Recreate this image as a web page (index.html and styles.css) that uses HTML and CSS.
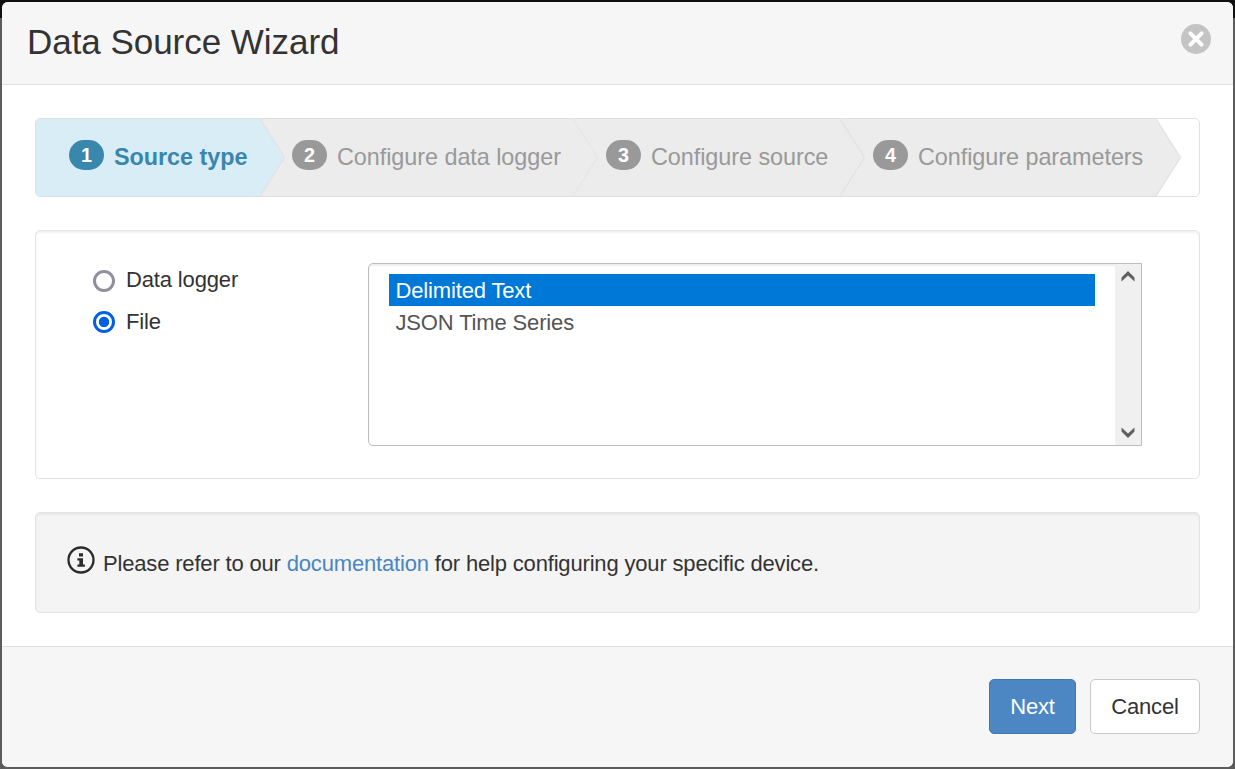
FILE: index.html
```html
<!DOCTYPE html>
<html lang="en">
<head>
<meta charset="utf-8">
<title>Data Source Wizard</title>
<link rel="stylesheet" href="styles.css">
</head>
<body>
<div class="modal">
  <header class="modal-header">
    <h1 class="title">Data Source Wizard</h1>
    <svg class="close" viewBox="0 0 30 30"><circle cx="15" cy="15" r="15" fill="#c4c4c4"/><path d="M9.4 9.4l11.2 11.2M20.6 9.4L9.4 20.6" stroke="#fff" stroke-width="4" stroke-linecap="round"/></svg>
  </header>
  <main class="modal-body">
    <ol class="steps">
      <li class="step step-1 active"><span class="badge">1</span><span class="label">Source type</span><svg class="arrow" viewBox="0 0 26 77"><path d="M0 0L24 38.5L0 77Z"/><path class="edge" d="M0 0L24.5 38.5L0 77"/></svg></li>
      <li class="step step-2"><span class="badge">2</span><span class="label">Configure data logger</span><svg class="arrow" viewBox="0 0 26 77"><path d="M0 0L24 38.5L0 77Z"/><path class="edge" d="M0 0L24.5 38.5L0 77"/></svg></li>
      <li class="step step-3"><span class="badge">3</span><span class="label">Configure source</span><svg class="arrow" viewBox="0 0 26 77"><path d="M0 0L24 38.5L0 77Z"/><path class="edge" d="M0 0L24.5 38.5L0 77"/></svg></li>
      <li class="step step-4"><span class="badge">4</span><span class="label">Configure parameters</span><svg class="arrow" viewBox="0 0 26 77"><path d="M0 0L24 38.5L0 77Z"/><path class="edge" d="M0 0L24.5 38.5L0 77"/></svg></li>
    </ol>
    <section class="panel source">
      <div class="radios">
        <div class="radio"><span class="dot"></span><span>Data logger</span></div>
        <div class="radio"><span class="dot checked"></span><span>File</span></div>
      </div>
      <div class="listbox">
        <div class="options">
          <div class="option selected">Delimited Text</div>
          <div class="option">JSON Time Series</div>
        </div>
        <div class="scrollbar">
          <svg class="chevron" viewBox="0 0 14 11"><path d="M0.5 6.5L7 0L13.5 6.5V10.5L7 4.4L0.5 10.5Z"/></svg>
          <svg class="chevron" viewBox="0 0 14 11"><path d="M0.5 4.5L7 11L13.5 4.5V0.5L7 6.6L0.5 0.5Z"/></svg>
        </div>
      </div>
    </section>
    <section class="panel note">
      <svg class="info" viewBox="0 0 28 28"><circle cx="14" cy="14" r="12.5" fill="none" stroke="#2b2b2b" stroke-width="2.3"/><path d="M12 7.2h4v3.2h-4zM10.4 12.2H16v6.4h1.9v2.2h-7.5v-2.2h1.9v-4.2h-1.9z" fill="#2b2b2b"/></svg>
      <p class="note-text">Please refer to our <a class="link">documentation</a> for help configuring your specific device.</p>
    </section>
  </main>
  <footer class="modal-footer">
    <button class="btn primary">Next</button>
    <button class="btn">Cancel</button>
  </footer>
</div>
</body>
</html>
```
FILE: styles.css
```css
* { box-sizing: border-box; }
body {
  margin: 0;
  height: 769px;
  padding: 2px;
  overflow: hidden;
  background: linear-gradient(#101010 0 18px, #5c5c5c 18px);
  font-family: "Liberation Sans", Arial, sans-serif;
  font-size: 22px;
  color: #333;
}
.modal {
  height: 765px;
  border-radius: 6px;
  overflow: hidden;
  background: #fff;
  display: flex;
  flex-direction: column;
}
.modal-header {
  height: 83px;
  padding: 0 22px 0 25px;
  background: #f6f6f6;
  border-bottom: 1px solid #e0e0e0;
  display: flex;
  justify-content: space-between;
}
.title { margin: 20px 0 0; font-size: 35px; line-height: 40px; font-weight: 400; letter-spacing: -.04px; }
.close { width: 30px; height: 30px; margin-top: 22px; }
.modal-body { flex: 1; padding: 33px; display: flex; flex-direction: column; gap: 33px; }
.steps {
  list-style: none;
  margin: 0;
  padding: 0;
  height: 79px;
  flex: none;
  display: flex;
  border: 1px solid #dfdfdf;
  border-radius: 5px;
  overflow: hidden;
}
.step {
  position: relative;
  display: flex;
  padding: 21px 0 0 31px;
  background: #ececec;
  fill: #ececec;
  color: #999;
  font-size: 23.4px;
  white-space: nowrap;
}
.step-1 { width: 224px; padding-left: 33px; }
.step-2 { width: 313px; padding-left: 32px; }
.step-3 { width: 267px; padding-left: 33px; }
.step-4 { width: 316px; padding-left: 33px; }
.active { background: #d9edf7; fill: #d9edf7; color: #3a87ad; font-weight: 700; }
.badge {
  width: 35px;
  height: 30px;
  border-radius: 15px;
  background: #999;
  color: #fff;
  font-size: 19.8px;
  line-height: 30px;
  font-weight: 700;
  text-align: center;
}
.active .badge { background: #3a87ad; }
.label { margin: 4px 0 0 10px; line-height: 27px; letter-spacing: -.05px; }
.arrow { position: absolute; z-index: 1; right: -26px; top: 0; width: 26px; height: 77px; }
.edge { fill: none; stroke: #e2e2e2; stroke-width: 1.3; }
.step-2 .edge { stroke: #e6e6e6; }
.panel {
  border: 1px solid #e3e3e3;
  border-radius: 5px;
  box-shadow: inset 0 2px 2px rgba(0, 0, 0, .05);
  display: flex;
  flex: none;
}
.source { height: 249px; padding: 32px 57px; justify-content: space-between; }
.radios { display: flex; flex-direction: column; gap: 16px; padding-top: 4px; letter-spacing: -.15px; }
.radio { display: flex; gap: 11px; line-height: 26px; }
.dot { width: 22px; height: 22px; margin-top: 3px; border: 3px solid #8f8f9d; border-radius: 50%; background: #fff; }
.checked { margin-top: 2px; border-color: #0060df; background: radial-gradient(circle, #0060df 4.8px, #fff 5.6px); }
.listbox {
  width: 774px;
  height: 183px;
  border: 1px solid #bdbdbd;
  border-radius: 5px 0 0 5px;
  box-shadow: inset 0 2px 2px rgba(0, 0, 0, .07);
  display: flex;
}
.options { flex: 1; padding: 10px 20px; }
.option { height: 32px; padding-left: 6.5px; line-height: 34px; color: #555; letter-spacing: -.15px; }
.selected { background: #0078d7; color: #fff; }
.scrollbar {
  width: 26px;
  padding: 7px 0 7px;
  background: #f0f0f0;
  display: flex;
  flex-direction: column;
  align-items: center;
  justify-content: space-between;
}
.chevron { width: 14px; height: 11px; fill: #606060; }
.note { height: 101px; padding-left: 31px; background: #f4f4f4; }
.info { width: 28px; height: 28px; margin-top: 33px; }
.note-text { margin: 38px 0 0 8px; line-height: 26px; white-space: nowrap; letter-spacing: -.17px; }
.link { color: #4a85c3; }
.modal-footer {
  height: 121px;
  padding: 32px 33px 0;
  background: #f6f6f6;
  border-top: 1px solid #e0e0e0;
  display: flex;
  justify-content: flex-end;
  gap: 14px;
}
.btn {
  width: 110px;
  height: 55px;
  padding: 0;
  border: 1px solid #c8c8c8;
  border-radius: 5px;
  background: #fff;
  color: #333;
  font: 22px "Liberation Sans", Arial, sans-serif;
  letter-spacing: -.15px;
}
.primary { width: 87px; background: #4c87c3; border-color: #3f78b3; color: #fff; }
```
